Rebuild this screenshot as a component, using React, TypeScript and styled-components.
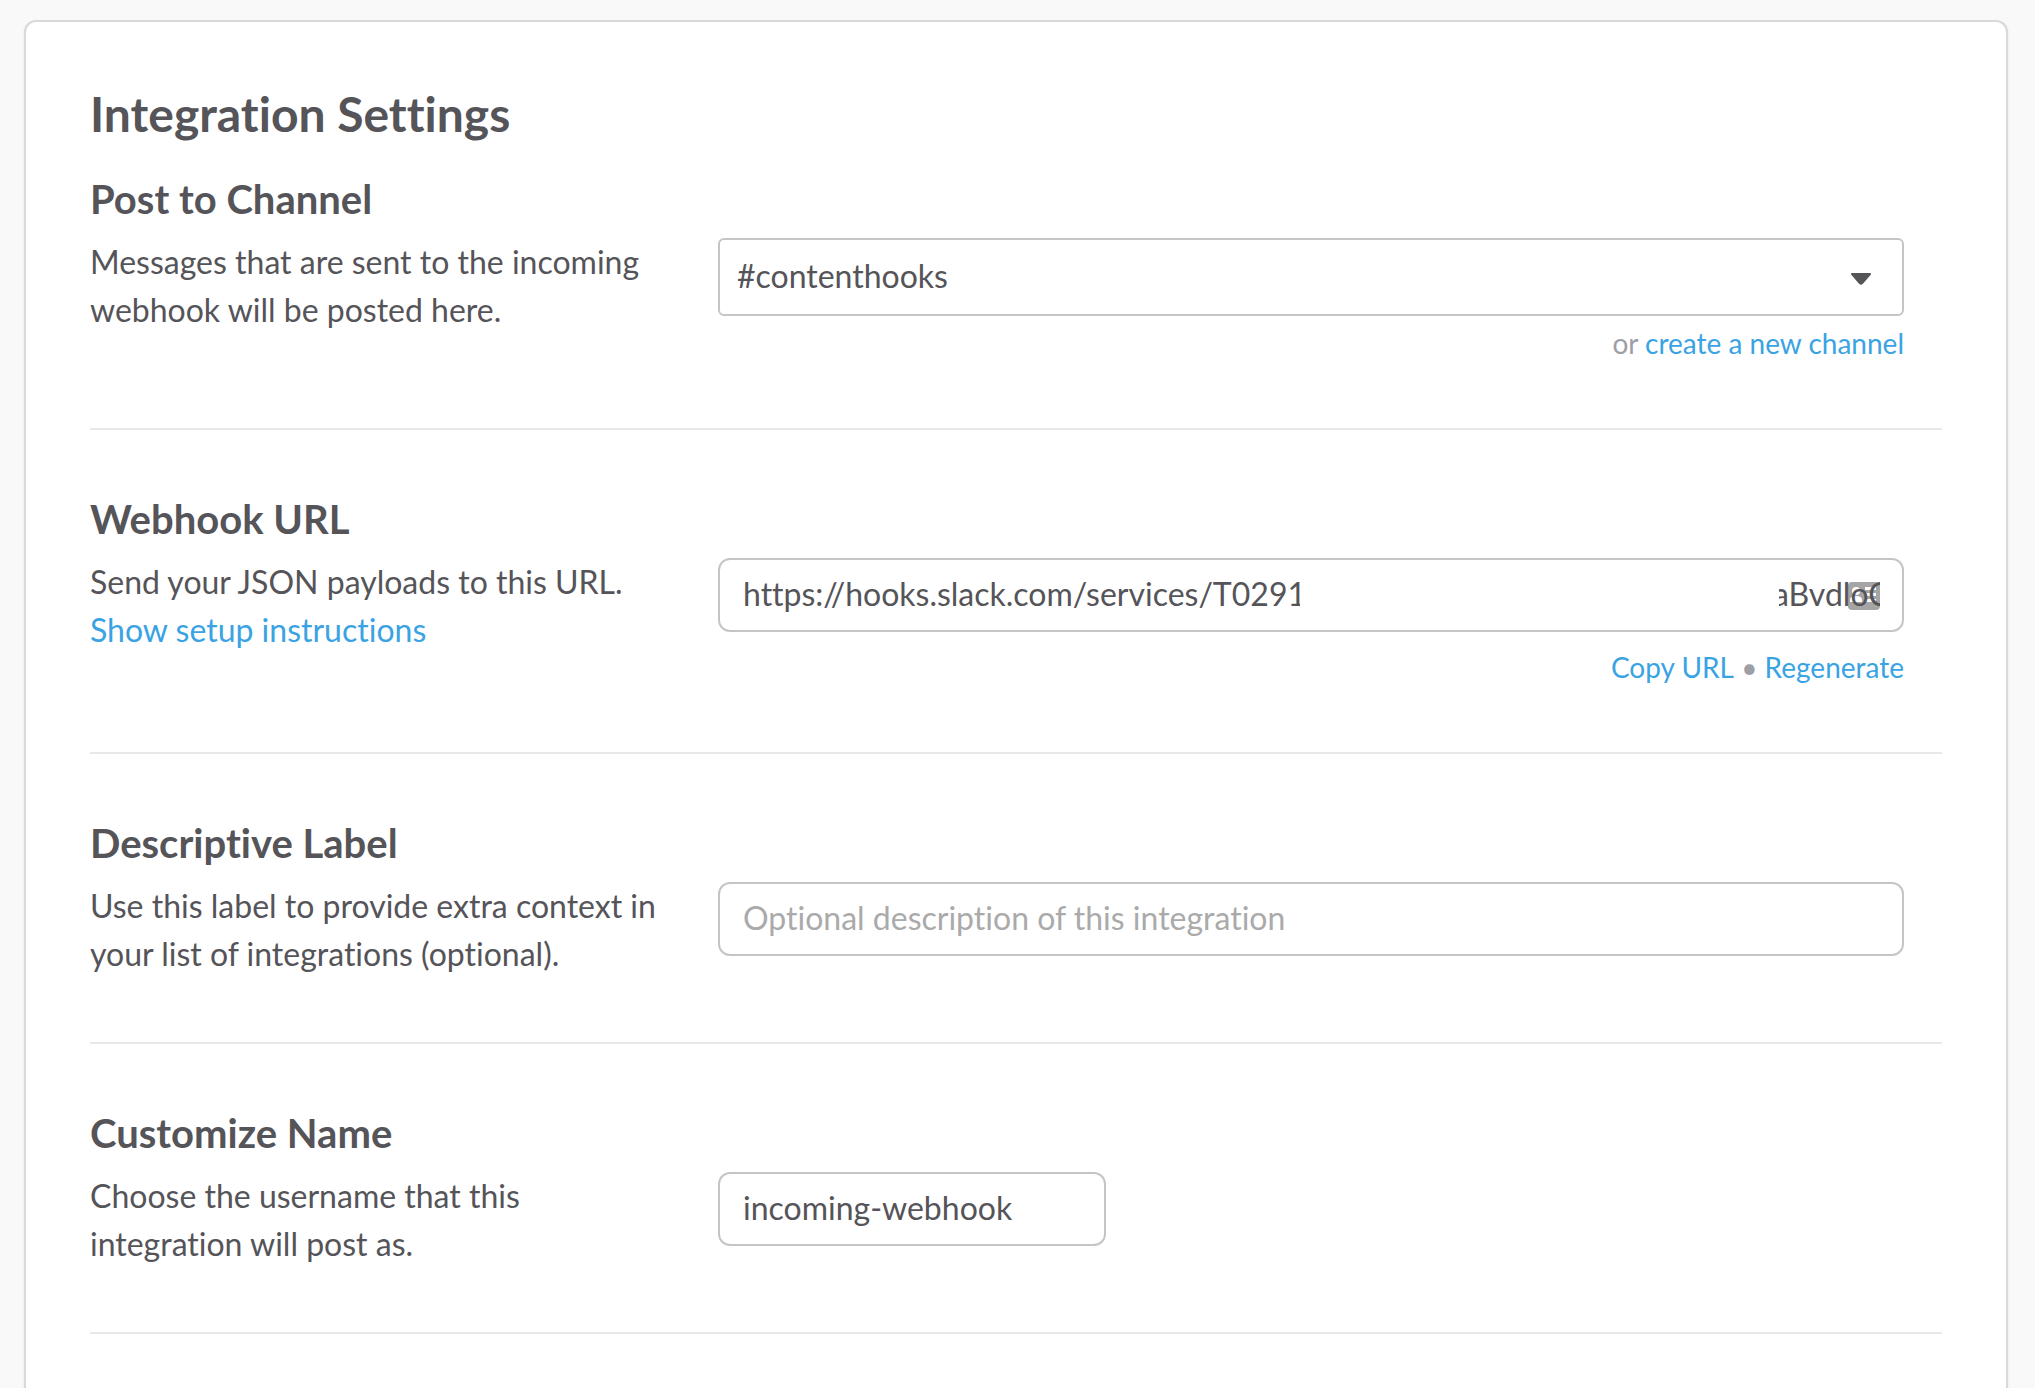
import React, { useState } from "react";
import styled, { createGlobalStyle } from "styled-components";

const color = {
  page: "#f9f9f9",
  card: "#ffffff",
  cardBorder: "#d9d9d9",
  rule: "#e8e8e8",
  fieldBorder: "#c5c5c5",
  text: "#555459",
  muted: "#9e9ea6",
  placeholder: "#aaaaaa",
  link: "#3aa3e3",
};

const GlobalStyle = createGlobalStyle`
  *, *::before, *::after { box-sizing: border-box; }
  body {
    margin: 0;
    background: ${color.page};
    color: ${color.text};
    font-family: Lato, "Open Sans", sans-serif;
    font-size: 32px;
    line-height: 48px;
    font-variant-ligatures: none;
  }
`;

const Page = styled.div`
  display: flex;
  flex-direction: column;
  min-height: 100vh;
  padding: 20px 27px 0 24px;
`;

const Card = styled.main`
  flex: 1;
  padding: 64px 64px 0;
  background: ${color.card};
  border: 2px solid ${color.cardBorder};
  border-bottom: 0;
  border-radius: 12px 12px 0 0;
  box-shadow: 0 2px 4px rgba(0, 0, 0, 0.06);
`;

const Title = styled.h1`
  margin: 0 0 32px;
  font-size: 48px;
  line-height: 56px;
  font-weight: 700;
`;

const Section = styled.section`
  padding-bottom: 64px;
  border-bottom: 2px solid ${color.rule};

  & + & {
    padding-top: 64px;
  }
`;

const SectionTitle = styled.h2`
  margin: 0 0 14px;
  font-size: 40px;
  line-height: 50px;
  font-weight: 700;
`;

const Columns = styled.div`
  display: grid;
  grid-template-columns: minmax(0, 576px) minmax(0, 1fr);
  column-gap: 52px;
  padding-right: 38px;
`;

const Description = styled.p`
  margin: 0;
`;

const Link = styled.a`
  color: ${color.link};
  text-decoration: none;

  &:hover {
    text-decoration: underline;
  }
`;

const LinkButton = styled.button`
  padding: 0;
  border: 0;
  background: none;
  color: ${color.link};
  font: inherit;
  font-variant-ligatures: none;
  cursor: pointer;
`;

const Field = styled.div`
  position: relative;
  display: flex;
`;

const Select = styled.select`
  appearance: none;
  width: 100%;
  height: 78px;
  padding: 0 80px 2px 17px;
  border: 2px solid ${color.fieldBorder};
  border-radius: 6px;
  background: ${color.card};
  color: ${color.text};
  font: inherit;
  font-variant-ligatures: none;
`;

const Caret = styled.svg`
  position: absolute;
  top: 34px;
  right: 32px;
  pointer-events: none;
`;

const TextInput = styled.input<{ $short?: boolean }>`
  position: relative;
  width: ${(p) => (p.$short ? "388px" : "100%")};
  height: 74px;
  padding: 0 22px 4px 23px;
  border: 2px solid ${color.fieldBorder};
  border-radius: 12px;
  background: transparent;
  color: ${color.text};
  font: inherit;
  font-variant-ligatures: none;

  &::placeholder {
    color: ${color.placeholder};
    opacity: 1;
  }
`;

const AutofillIcon = styled.svg`
  position: absolute;
  top: 24px;
  right: 24px;
`;

const Redaction = styled.span`
  position: absolute;
  top: 8px;
  bottom: 8px;
  left: 582px;
  right: 125px;
  background: ${color.card};
`;

const Help = styled.div<{ $gap: number }>`
  margin-top: ${(p) => p.$gap}px;
  color: ${color.muted};
  font-size: 28px;
  line-height: 42px;
  text-align: right;
`;

const webhookUrl =
  "https://hooks.slack.com/services/T0291" + " ".repeat(57) + "aBvdloC";

export default function App() {
  const [label, setLabel] = useState("");
  const [name, setName] = useState("incoming-webhook");

  return (
    <>
      <GlobalStyle />
      <Page>
        <Card>
          <Title>Integration Settings</Title>

          <Section>
            <SectionTitle>
              <label htmlFor="channel">Post to Channel</label>
            </SectionTitle>
            <Columns>
              <Description>
                Messages that are sent to the incoming webhook will be posted here.
              </Description>
              <div>
                <Field>
                  <Select id="channel" defaultValue="contenthooks">
                    <option value="contenthooks">#contenthooks</option>
                  </Select>
                  <Caret width="22" height="14" viewBox="0 0 22 14" aria-hidden="true">
                    <path
                      d="M2 2h18L12.200 11q-1.200 1.200-2.400 0z"
                      fill={color.text}
                      stroke={color.text}
                      strokeWidth="2"
                      strokeLinejoin="round"
                    />
                  </Caret>
                </Field>
                <Help $gap={6}>
                  or <Link href="#new-channel">create a new channel</Link>
                </Help>
              </div>
            </Columns>
          </Section>

          <Section>
            <SectionTitle>
              <label htmlFor="url">Webhook URL</label>
            </SectionTitle>
            <Columns>
              <Description>
                Send your JSON payloads to this URL.{" "}
                <Link href="#setup">Show setup instructions</Link>
              </Description>
              <div>
                <Field>
                  <AutofillIcon width="32" height="28" viewBox="0 0 32 28" aria-hidden="true">
                    <rect width="32" height="28" rx="4" fill="#a5a5a5" />
                    <circle cx="8" cy="9" r="4" fill="#fff" />
                    <path d="M2 20v-2q0-4 6-4t6 4v2z" fill="#fff" />
                    <path d="M17 6.500h11M17 12.500h11M17 18.500h11" stroke="#fff" strokeWidth="3" />
                  </AutofillIcon>
                  <TextInput id="url" type="text" readOnly value={webhookUrl} />
                  <Redaction />
                </Field>
                <Help $gap={14}>
                  <LinkButton type="button">Copy URL</LinkButton> •{" "}
                  <LinkButton type="button">Regenerate</LinkButton>
                </Help>
              </div>
            </Columns>
          </Section>

          <Section>
            <SectionTitle>
              <label htmlFor="label">Descriptive Label</label>
            </SectionTitle>
            <Columns>
              <Description>
                Use this label to provide extra context in your list of integrations (optional).
              </Description>
              <Field>
                <TextInput
                  id="label"
                  type="text"
                  placeholder="Optional description of this integration"
                  value={label}
                  onChange={(e) => setLabel(e.target.value)}
                />
              </Field>
            </Columns>
          </Section>

          <Section>
            <SectionTitle>
              <label htmlFor="name">Customize Name</label>
            </SectionTitle>
            <Columns>
              <Description>
                Choose the username that this integration will post as.
              </Description>
              <Field>
                <TextInput
                  $short
                  id="name"
                  type="text"
                  value={name}
                  onChange={(e) => setName(e.target.value)}
                />
              </Field>
            </Columns>
          </Section>
        </Card>
      </Page>
    </>
  );
}
